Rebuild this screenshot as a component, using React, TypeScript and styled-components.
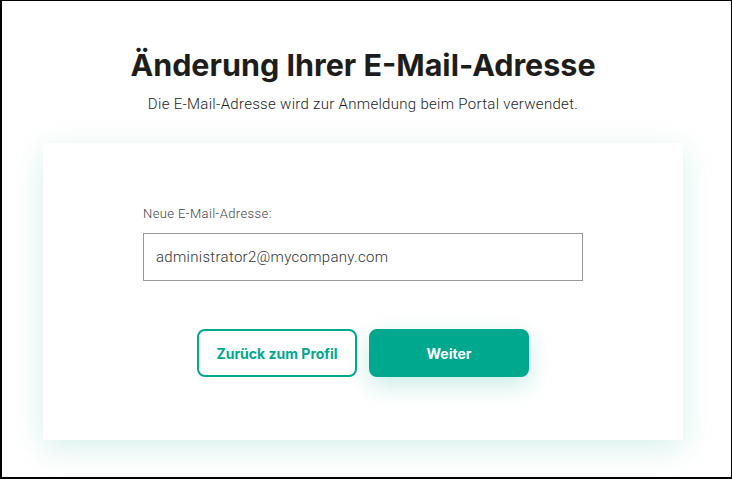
import React, { useState } from "react";
import styled, { createGlobalStyle } from "styled-components";

const GlobalStyle = createGlobalStyle`
  html, body {
    margin: 0;
    padding: 0;
    background: #ffffff;
  }
  * {
    box-sizing: border-box;
  }
`;

const Frame = styled.div`
  width: 732px;
  height: 479px;
  border-style: solid;
  border-color: #000;
  border-width: 1px 1px 2px 2px;
  padding: 44px 7px 0 0;
  display: flex;
  flex-direction: column;
  align-items: center;
  overflow: hidden;
  font-family: Roboto, "Liberation Sans", sans-serif;
  background: #fff;
`;

const Title = styled.h1`
  margin: 0;
  font-family: Inter, Roboto, "Liberation Sans", sans-serif;
  font-size: 30.5px;
  font-weight: 700;
  line-height: 40px;
  color: #1d1d1b;
  letter-spacing: 0;
`;

const Subtitle = styled.p`
  margin: 9px 0 0;
  font-size: 15px;
  font-weight: 300;
  line-height: 20px;
  color: #1d1d1b;
  letter-spacing: 0.3px;
`;

const Card = styled.div`
  margin-top: 29px;
  width: 640px;
  height: 297px;
  background: #fff;
  box-shadow: 0 8px 30px rgba(0, 168, 142, 0.16);
  padding-top: 63px;
  display: flex;
  flex-direction: column;
  align-items: center;
`;

const Field = styled.div`
  width: 440px;
  display: flex;
  flex-direction: column;
`;

const Label = styled.label`
  font-size: 13px;
  font-weight: 300;
  line-height: 16px;
  color: #444;
  margin-bottom: 11px;
  letter-spacing: 0.4px;
`;

const Input = styled.input`
  width: 440px;
  height: 48px;
  border: 1px solid #999;
  border-radius: 0;
  padding: 0 12px;
  font-family: Roboto, "Liberation Sans", sans-serif;
  font-size: 15px;
  font-weight: 300;
  color: #333;
  outline: none;
  letter-spacing: 0.3px;
`;

const Actions = styled.div`
  margin-top: 48px;
  display: flex;
  gap: 12px;
`;

const Button = styled.button<{ $primary?: boolean }>`
  width: 160px;
  height: 48px;
  border-radius: 8px;
  border: 2px solid #00a88e;
  background: ${({ $primary }) => ($primary ? "#00a88e" : "#fff")};
  color: ${({ $primary }) => ($primary ? "#fff" : "#00a88e")};
  font-family: Inter, Roboto, "Liberation Sans", sans-serif;
  font-size: 14px;
  font-weight: 700;
  cursor: pointer;
  box-shadow: ${({ $primary }) =>
    $primary ? "0 8px 24px rgba(0, 168, 142, 0.22)" : "none"};
`;

export default function App() {
  const [email, setEmail] = useState("administrator2@mycompany.com");

  return (
    <>
      <GlobalStyle />
      <Frame>
        <Title>Änderung Ihrer E-Mail-Adresse</Title>
        <Subtitle>
          Die E-Mail-Adresse wird zur Anmeldung beim Portal verwendet.
        </Subtitle>
        <Card>
          <Field>
            <Label htmlFor="email">Neue E-Mail-Adresse:</Label>
            <Input
              id="email"
              value={email}
              onChange={(e) => setEmail(e.target.value)}
            />
          </Field>
          <Actions>
            <Button>Zurück zum Profil</Button>
            <Button $primary>Weiter</Button>
          </Actions>
        </Card>
      </Frame>
    </>
  );
}
